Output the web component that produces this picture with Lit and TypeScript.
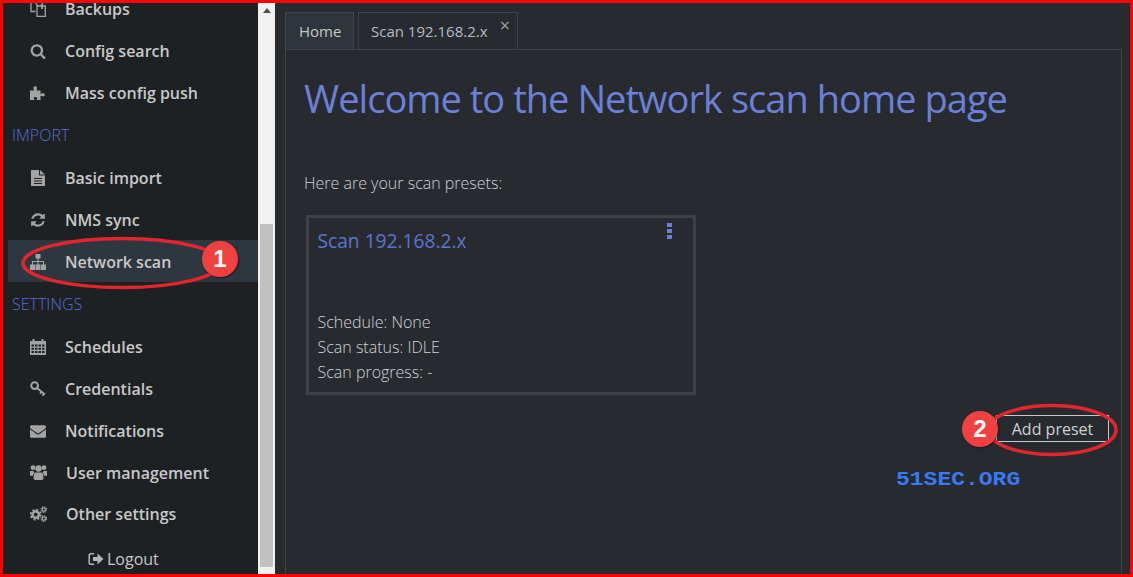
import { LitElement, html, css, svg } from "lit";
import { customElement } from "lit/decorators.js";

const icons: Record<string, unknown> = {
  backups: svg`<path fill="none" stroke="currentColor" stroke-width="1.300" d="M5.500 10.500H1V1.200h3.800L7 3.400v1.500M7 5h3.500l2-2V1.200H9M7 5h8.300v10.300H7z"/><path fill="currentColor" d="M11 5h2v3h-2z"/>`,
  search: svg`<g transform="scale(.00893)"><path fill="currentColor" d="M1216 832q0-185-131.500-316.500t-316.500-131.500-316.500 131.500-131.500 316.500 131.500 316.500 316.500 131.500 316.500-131.500 131.500-316.500zm512 832q0 52-38 90t-90 38q-54 0-90-38l-343-342q-179 124-399 124-143 0-273.500-55.500t-225-150-150-225-55.500-273.500 55.500-273.500 150-225 225-150 273.500-55.500 273.500 55.500 225 150 150 225 55.500 273.500q0 220-124 399l343 343q37 37 37 90z"/></g>`,
  puzzle: svg`<path fill="currentColor" d="M0 5.500h3.500c.6 0 .3-1 .1-1.400C3.200 3.300 3.300 1.200 5.200 1.200s2 2.100 1.600 2.900c-.2.400-.5 1.400.1 1.400H10.500v3c0 .6.800.4 1.300.1.800-.5 3-.4 3 1.200s-2.200 1.700-3 1.200c-.5-.3-1.300-.5-1.300.1V15H7c-.6 0-.3-.9 0-1.300.4-.7.300-1.700-1.500-1.700s-1.900 1-1.500 1.700c.3.400.6 1.300 0 1.300H0z"/>`,
  file: svg`<path fill="currentColor" fill-rule="evenodd" d="M1 0h8v5.500h6V16H1zM10 0l5 4.500h-5zM4 8v1h8V8zM4 10.500v1h8v-1zM4 13v1h8v-1z"/>`,
  refresh: svg`<g transform="scale(.00893)"><path fill="currentColor" d="M1639 1056q0 5-1 7-64 268-268 434.500t-478 166.500q-146 0-282.500-55t-243.500-157l-129 129q-19 19-45 19t-45-19-19-45v-448q0-26 19-45t45-19h448q26 0 45 19t19 45-19 45l-137 137q71 66 161 102t187 36q134 0 250-65t186-179q11-17 53-117 8-23 30-23h192q13 0 22.500 9.500t9.500 22.500zm25-800v448q0 26-19 45t-45 19h-448q-26 0-45-19t-19-45 19-45l138-138q-148-137-349-137-134 0-250 65t-186 179q-11 17-53 117-8 23-30 23h-199q-13 0-22.500-9.500t-9.500-22.500v-7q65-268 270-434.500t480-166.500q146 0 284 55.500t245 156.500l130-129q19-19 45-19t45 19 19 45z"/></g>`,
  sitemap: svg`<path fill="currentColor" d="M5.500 0h5v4.500H8.600V7H14v3.500h2V16h-5v-5.500h2V8H8.600v2.500h1.900V16h-5v-5.500h1.900V8H3v2.500h2V16H0v-5.500h2V7h5.400V4.500H5.500z"/>`,
  calendar: svg`<path fill="currentColor" fill-rule="evenodd" d="M0 2h2.500V0h2v2h7V0h2v2H16v14H0zM1.500 5.500v2h2.500v-2zM5 5.500v2h2.500v-2zM8.500 5.500v2H11v-2zM12 5.500v2h2.500v-2zM1.500 8.700v2h2.500v-2zM5 8.700v2h2.500v-2zM8.500 8.700v2H11v-2zM12 8.700v2h2.500v-2zM1.500 12v2h2.500v-2zM5 12v2h2.500v-2zM8.500 12v2H11v-2zM12 12v2h2.500v-2z"/>`,
  key: svg`<circle cx="4.600" cy="4.600" r="3.400" fill="none" stroke="currentColor" stroke-width="2"/><path fill="none" stroke="currentColor" stroke-width="1.800" d="M7 7l8 6.500M11.500 10.700l-1.500 2M14 12.800l-1.500 2"/>`,
  envelope: svg`<g transform="scale(.00893)"><path fill="currentColor" d="M1792 710v794q0 66-47 113t-113 47h-1472q-66 0-113-47t-47-113v-794q44 49 101 87 362 246 497 345 57 42 92.500 65.500t94.500 48 110 24.500h2q51 0 110-24.500t94.500-48 92.500-65.500q170-123 498-345 57-39 100-87zm0-294q0 79-49 151t-122 123q-376 261-468 325-10 7-42.500 30.500t-54 38-52 32.500-57.500 27-50 9h-2q-23 0-50-9t-57.500-27-52-32.500-54-38-42.500-30.500q-91-64-262-182.500t-205-142.500q-62-42-117-115.500t-55-136.500q0-78 41.500-130t118.500-52h1472q65 0 112.500 47t47.500 113z"/></g>`,
  users: svg`<g fill="currentColor"><circle cx="3" cy="2.700" r="2.400"/><circle cx="14" cy="2.700" r="2.400"/><circle cx="8.500" cy="3.500" r="3.200"/><path d="M0 6h3.500c.3 1 .8 1.500 1.200 1.800-1 .8-1.600 1.700-1.700 3H0zM17 6h-3.500c-.3 1-.8 1.500-1.200 1.800 1 .8 1.600 1.700 1.700 3H17zM5.500 7.500h6c1.500.8 2 3 2 5.500 0 1.200-.7 2-2 2h-6c-1.300 0-2-.8-2-2 0-2.500.5-4.700 2-5.500z"/></g>`,
  cogs: svg`<g fill="none" stroke="currentColor"><circle cx="5.700" cy="8.600" r="3.200" stroke-width="2.600"/><circle cx="5.700" cy="8.600" r="5" stroke-width="1.800" stroke-dasharray="2 1.930"/><circle cx="13.800" cy="3.600" r="1.700" stroke-width="1.300"/><circle cx="13.800" cy="3.600" r="2.800" stroke-width="1.200" stroke-dasharray="1.200 1"/><circle cx="13.800" cy="12.600" r="1.700" stroke-width="1.300"/><circle cx="13.800" cy="12.600" r="2.800" stroke-width="1.200" stroke-dasharray="1.200 1"/></g>`,
  logout: svg`<path fill="none" stroke="currentColor" stroke-width="1.500" d="M6 2.800H3c-1 0-1.800.8-1.800 1.800v6.800c0 1 .8 1.800 1.800 1.800h3"/><path fill="currentColor" d="M5 6h4.500V2.500L15.500 8l-6 5.500V10H5z"/>`,
};

const icon = (name: string, w = 16) =>
  html`<svg class="ic" width=${w} height="16" viewBox="0 0 ${w} 16">${icons[name]}</svg>`;

@customElement("app-root")
export class AppRoot extends LitElement {
  static styles = css`
    :host { display: block; }
    * { box-sizing: border-box; }
    .frame {
      position: relative; height: 577px; overflow: hidden; display: flex;
      border: 3px solid #ff0000; background: #272b30;
      font-family: "Open Sans", sans-serif;
    }
    .side { width: 255px; flex: none; background: #1e2124; overflow: hidden; }
    .nav { margin-top: -15px; }
    .item {
      height: 42px; margin-left: 5px; padding-left: 22px; display: flex; align-items: center;
      color: #c8c8c8; font-size: 16px; font-weight: 600;
    }
    .item.active { background: #2e3640; margin-top: -1px; margin-bottom: 1px; padding-top: 2px; }
    .item .ic { flex: none; color: #a3a3a3; }
    .item .lbl { margin-left: 19px; }
    .item.wide { height: 41.500px; }
    .item.wide .lbl { margin-left: 19px; }
    .sec {
      height: 42px; margin-bottom: 1px; padding-left: 9px; display: flex; align-items: center;
      color: #5570d8; font-size: 16px; font-weight: 300;
    }
    .logout {
      height: 30px; margin-top: 9px; padding-left: 85px; display: flex; align-items: center; gap: 3px;
      color: #c8c8c8; font-size: 16px;
    }
    .logout .ic { color: #b5b5b5; }
    .sb { width: 17px; flex: none; background: #f1f1f1; display: flex; flex-direction: column; align-items: center; }
    .up { margin-top: 5px; width: 0; height: 0; border: 4px solid transparent; border-top: 0; border-bottom: 5px solid #505050; }
    .thumb { margin-top: 211px; width: 13px; height: 343px; background: #c1c1c1; }
    .main { flex: 1; min-width: 0; padding: 9px 8px 0 10px; display: flex; flex-direction: column; }
    .tabs { display: flex; gap: 4px; height: 37px; flex: none; align-items: stretch; }
    .tab {
      position: relative; border: 1px solid #3e444a; border-bottom: 0; padding: 0 12px;
      display: flex; align-items: center; font-size: 15px; color: #b4bcc4; width: 160px;
    }
    .tab.on { background: #2e353c; color: #c8c8c8; width: 69px; padding: 0 0 0 13px; }
    .tab .x { position: absolute; right: 7px; top: 2px; font-size: 18px; line-height: 20px; color: #9a9fa5; }
    .panel { flex: 1; border: 1px solid #3e444a; border-bottom: 0; padding: 0 17px 0 18px; display: flex; flex-direction: column; }
    h1 { margin: 20px 0 0; font-size: 38px; letter-spacing: -.960px; line-height: 57px; font-weight: 400; color: #6b80d6; white-space: nowrap; }
    .intro { margin: 44px 0 0; font-size: 16px; line-height: 24px; font-weight: 300; color: #cfd2d6; }
    .card {
      position: relative; margin: 20px 0 0 2px; width: 390px; height: 180px; flex: none;
      border: 3px solid #3d4145; padding: 10px 8.500px; display: flex; flex-direction: column;
    }
    .card h3 { margin: 0; font-size: 19.200px; line-height: 26px; font-weight: 400; color: #5a75d0; }
    .meta { margin-top: 56px; font-size: 16px; line-height: 25px; font-weight: 300; color: #cfd2d6; }
    .dots { position: absolute; top: 5px; right: 21px; width: 5px; height: 16px; display: flex; flex-direction: column; justify-content: space-between; }
    .dots i { display: block; height: 4px; background: #6b80d6; }
    .actions { display: flex; justify-content: flex-end; margin-top: 20px; }
    .btn {
      width: 113px; height: 27px; border: 1px solid #c8c8c8; background: transparent; margin-right: -5px;
      display: flex; align-items: center; justify-content: center; font-size: 16px; color: #d0d0d0;
      font-family: inherit; padding: 0;
    }
    .over { position: absolute; left: -3px; top: -3px; pointer-events: none; }
    .badge {
      position: absolute; width: 36px; height: 36px; border-radius: 50%; background: #f0403f;
      display: flex; align-items: center; justify-content: center; color: #fff;
      font-family: "Liberation Sans", sans-serif; font-weight: 700; font-size: 24px;
      box-shadow: 1px 1px 2px rgba(0,0,0,.4);
    }
    .b1 { left: 199px; top: 238px; }
    .b2 { left: 959px; top: 408px; }
    .mark {
      position: absolute; left: 893px; top: 466px; font-family: "Liberation Mono", monospace; font-weight: 700;
      font-size: 20px; line-height: 22px; color: #3b78f2; transform: scaleX(1.150); transform-origin: left center;
    }
  `;

  render() {
    const top: [string, string][] = [["backups", "Backups"], ["search", "Config search"], ["puzzle", "Mass config push"]];
    const imp: [string, string, boolean][] = [["file", "Basic import", false], ["refresh", "NMS sync", false], ["sitemap", "Network scan", true]];
    const set: [string, string][] = [["calendar", "Schedules"], ["key", "Credentials"], ["envelope", "Notifications"]];
    const wide: [string, string][] = [["users", "User management"], ["cogs", "Other settings"]];
    return html`
      <div class="frame">
        <aside class="side">
          <div class="nav">
            ${top.map(([i, l]) => html`<div class="item">${icon(i)}<span class="lbl">${l}</span></div>`)}
            <div class="sec">IMPORT</div>
            ${imp.map(([i, l, a]) => html`<div class="item ${a ? "active" : ""}">${icon(i)}<span class="lbl">${l}</span></div>`)}
            <div class="sec">SETTINGS</div>
            ${set.map(([i, l]) => html`<div class="item">${icon(i)}<span class="lbl">${l}</span></div>`)}
            ${wide.map(([i, l]) => html`<div class="item wide">${icon(i, 17)}<span class="lbl">${l}</span></div>`)}
            <div class="logout">${icon("logout")}<span>Logout</span></div>
          </div>
        </aside>
        <div class="sb"><div class="up"></div><div class="thumb"></div></div>
        <main class="main">
          <div class="tabs">
            <div class="tab on">Home</div>
            <div class="tab">Scan 192.168.2.x<span class="x">×</span></div>
          </div>
          <section class="panel">
            <h1>Welcome to the Network scan home page</h1>
            <p class="intro">Here are your scan presets:</p>
            <div class="card">
              <h3>Scan 192.168.2.x</h3>
              <div class="dots"><i></i><i></i><i></i></div>
              <div class="meta">Schedule: None<br />Scan status: IDLE<br />Scan progress: -</div>
            </div>
            <div class="actions"><button class="btn">Add preset</button></div>
          </section>
        </main>
        <svg class="over" width="1133" height="577" fill="none" stroke="#e3262e" stroke-width="3.500">
          <ellipse cx="122" cy="263" rx="99" ry="24.500"/>
          <ellipse cx="1052" cy="430" rx="64" ry="24.500"/>
        </svg>
        <div class="badge b1">1</div>
        <div class="badge b2">2</div>
        <div class="mark">51SEC.ORG</div>
      </div>
    `;
  }
}
